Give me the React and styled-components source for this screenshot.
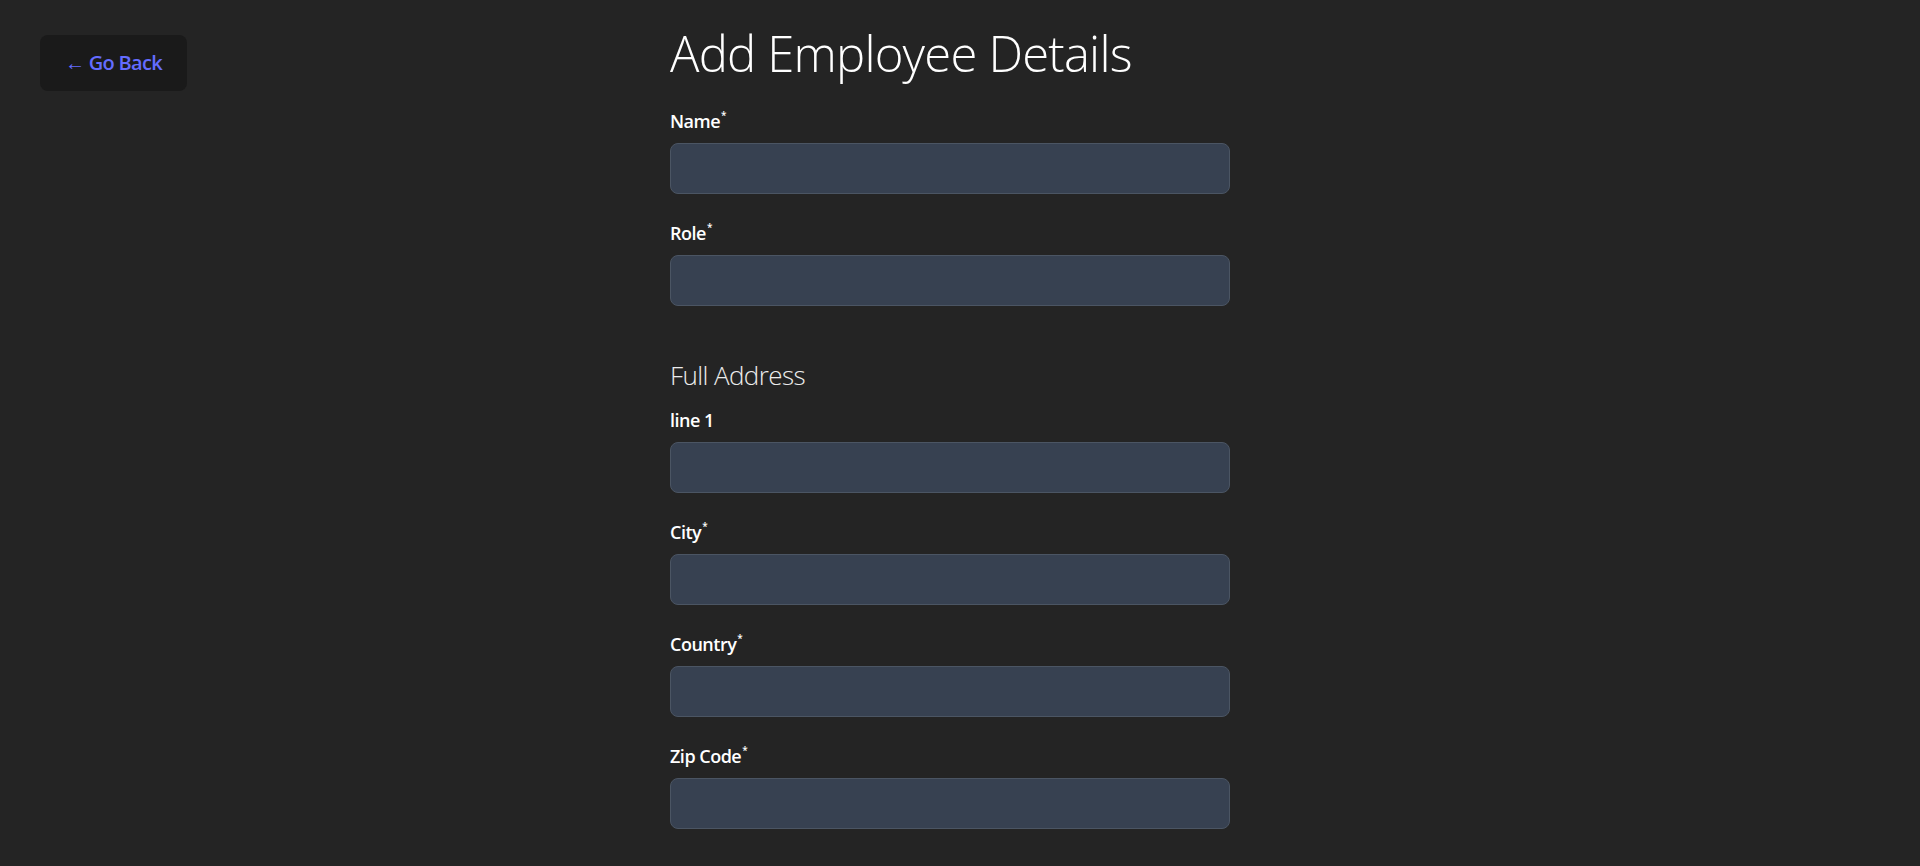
import React from "react";
import styled, { createGlobalStyle } from "styled-components";

const GlobalStyle = createGlobalStyle`
  :root {
    color-scheme: dark;
  }
  * { box-sizing: border-box; }
  html, body {
    margin: 0;
    padding: 0;
    background: #242424;
  }
  body {
    font-family: "Open Sans", "Noto Sans", "Liberation Sans", sans-serif;
    color: rgba(255, 255, 255, 0.87);
    line-height: 1.5;
    -webkit-font-smoothing: antialiased;
  }
`;

const Page = styled.div`
  display: grid;
  grid-template-columns: 1fr 560px 1fr;
  padding: 24px 60px 64px 40px;
  min-height: 100vh;
`;

const Side = styled.div`
  display: flex;
  align-items: flex-start;
`;

const BackButton = styled.button`
  margin-top: 11px;
  height: 56px;
  padding: 0 24px;
  border: 1px solid transparent;
  border-radius: 8px;
  background: #1a1a1a;
  color: #646cff;
  font-family: inherit;
  font-size: 20px;
  font-weight: 600;
  letter-spacing: -0.7px;
  line-height: 30px;
  cursor: pointer;
`;

const Form = styled.form`
  display: flex;
  flex-direction: column;
`;

const Title = styled.h1`
  margin: 1px 0 27px;
  font-size: 49px;
  font-weight: 300;
  line-height: 56px;
  letter-spacing: -0.8px;
  color: #ffffff;
`;

const SectionTitle = styled.h2`
  margin: 24px 0 12px;
  font-size: 26px;
  font-weight: 300;
  line-height: 39px;
  letter-spacing: -0.6px;
  color: #ececec;
`;

const Field = styled.div`
  display: flex;
  flex-direction: column;
  gap: 8px;
  margin-bottom: 26px;
`;

const Label = styled.label`
  font-size: 18px;
  font-weight: 600;
  line-height: 27px;
  letter-spacing: -0.5px;
  color: #ffffff;
`;

const Required = styled.sup`
  font-size: 10px;
  line-height: 0;
  vertical-align: 9px;
  margin-left: 1px;
`;

const Input = styled.input`
  width: 100%;
  height: 51px;
  padding: 0 14px;
  border: 1px solid #4b5563;
  border-radius: 8px;
  background: #374151;
  color: #ffffff;
  font-family: inherit;
  font-size: 16px;
  outline: none;
`;

const SubmitButton = styled.button`
  margin-top: 8px;
  height: 51px;
  border: 1px solid transparent;
  border-radius: 8px;
  background: #1a1a1a;
  color: #646cff;
  font-family: inherit;
  font-size: 18px;
  font-weight: 600;
  cursor: pointer;
`;

const TextField = ({ id, label, required }) => (
  <Field>
    <Label htmlFor={id}>
      {label}
      {required && <Required>*</Required>}
    </Label>
    <Input id={id} type="text" />
  </Field>
);

export default function App() {
  return (
    <>
      <GlobalStyle />
      <Page>
        <Side>
          <BackButton type="button">← Go Back</BackButton>
        </Side>
        <Form onSubmit={(e) => e.preventDefault()}>
          <Title>Add Employee Details</Title>
          <TextField id="name" label="Name" required />
          <TextField id="role" label="Role" required />
          <SectionTitle>Full Address</SectionTitle>
          <TextField id="line1" label="line 1" />
          <TextField id="city" label="City" required />
          <TextField id="country" label="Country" required />
          <TextField id="zip" label="Zip Code" required />
          <SectionTitle>Contact Details</SectionTitle>
          <TextField id="email" label="Email" required />
          <TextField id="phone" label="Phone" required />
          <TextField id="joined" label="Date of Joining" required />
          <TextField id="department" label="Department" />
          <TextField id="manager" label="Reporting Manager" />
          <SubmitButton type="submit">Submit</SubmitButton>
        </Form>
        <Side />
      </Page>
    </>
  );
}
